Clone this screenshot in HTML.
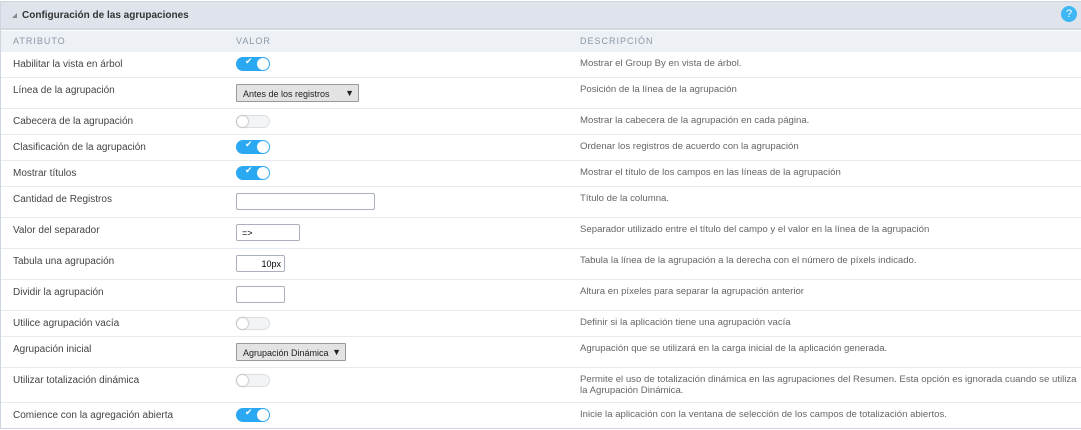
<!DOCTYPE html><html><head><style>
*{margin:0;padding:0;box-sizing:border-box}
body{width:1081px;height:430px;background:#fff;font-family:"Liberation Sans",Arial,sans-serif;position:relative;overflow:hidden}
.frame{position:absolute;left:0;top:1px;width:1090px;height:428px;border:1px solid #cdd5df}
.hdr{position:absolute;left:1px;top:2px;width:1080px;height:28px;background:#dfe4ec;border-bottom:2px solid #d2d9e2}
.hdr span{position:absolute;left:21px;top:8px;font-size:10px;font-weight:bold;color:#333}
.tri{position:absolute;left:11px;top:11px;width:0;height:0;border-left:5px solid transparent;border-bottom:5px solid #888}
.help{position:absolute;left:1060px;top:4px;width:16px;height:16px;border-radius:50%;background:#3fb7f5;color:#fff;font-size:11px;text-align:center;line-height:16px}
.ch{position:absolute;left:1px;top:31px;width:1080px;height:21px;background:#edf0f4;font-size:9px;letter-spacing:1px;color:#8a97a6}
.ch span{position:absolute;top:5px}
.row{position:absolute;left:1px;width:1080px;border-bottom:1px solid #e6ebf1;font-size:10px}
.l{position:absolute;left:12px;top:7px;color:#444}
.d{position:absolute;left:579px;top:6px;color:#666;font-size:9.6px;line-height:11px;width:500px}
.t{position:absolute;left:235px;top:5px;width:34px;height:14px;border-radius:7px;background:#2aa8f2}
.t::after{content:"";position:absolute;right:1px;top:1px;width:12px;height:12px;border-radius:50%;background:#fff}
.t i{position:absolute;left:9px;top:-1px;color:#fff;font-size:9px;font-style:normal}
.o{position:absolute;left:235px;top:6px;width:34px;height:13px;border-radius:7px;background:#f3f4f6;border:1px solid #dcdfe4}
.o::after{content:"";position:absolute;left:0;top:0;width:11px;height:11px;border-radius:50%;background:#fff;box-shadow:0 0 2px #888}
.in{position:absolute;left:235px;height:17px;border:1px solid #a9b0ba;border-radius:2px;background:#fff;font-size:9px;padding:3px 5px}
.sel{position:absolute;left:235px;height:18px;border:1px solid #999;background:#e3e3e3;font-size:9px;padding:4px 6px;color:#222;border-radius:1px}
.sel b{position:absolute;right:4px;top:3px;font-size:9px}
</style></head><body>
<div class="frame"></div>
<div class="hdr"><div class="tri"></div><span>Configuración de las agrupaciones</span><div class="help">?</div></div>
<div class="ch"><span style="left:12px">ATRIBUTO</span><span style="left:235px">VALOR</span><span style="left:579px">DESCRIPCIÓN</span></div>

<div class="row" style="top:52px;height:26px"><span class="l">Habilitar la vista en árbol</span><div class="t"><i>✔</i></div><span class="d">Mostrar el Group By en vista de árbol.</span></div>
<div class="row" style="top:78px;height:31px"><span class="l">Línea de la agrupación</span><div class="sel" style="top:6px;width:123px">Antes de los registros<b>▼</b></div><span class="d">Posición de la línea de la agrupación</span></div>
<div class="row" style="top:109px;height:26px"><span class="l">Cabecera de la agrupación</span><div class="o"></div><span class="d">Mostrar la cabecera de la agrupación en cada página.</span></div>
<div class="row" style="top:135px;height:26px"><span class="l">Clasificación de la agrupación</span><div class="t"><i>✔</i></div><span class="d">Ordenar los registros de acuerdo con la agrupación</span></div>
<div class="row" style="top:161px;height:26px"><span class="l">Mostrar títulos</span><div class="t"><i>✔</i></div><span class="d">Mostrar el título de los campos en las líneas de la agrupación</span></div>
<div class="row" style="top:187px;height:31px"><span class="l">Cantidad de Registros</span><div class="in" style="top:6px;width:139px"></div><span class="d">Título de la columna.</span></div>
<div class="row" style="top:218px;height:31px"><span class="l">Valor del separador</span><div class="in" style="top:6px;width:64px">=&gt;</div><span class="d">Separador utilizado entre el título del campo y el valor en la línea de la agrupación</span></div>
<div class="row" style="top:249px;height:31px"><span class="l">Tabula una agrupación</span><div class="in" style="top:6px;width:49px;text-align:right;padding-right:3px">10px</div><span class="d">Tabula la línea de la agrupación a la derecha con el número de píxels indicado.</span></div>
<div class="row" style="top:280px;height:31px"><span class="l">Dividir la agrupación</span><div class="in" style="top:6px;width:49px"></div><span class="d">Altura en píxeles para separar la agrupación anterior</span></div>
<div class="row" style="top:311px;height:26px"><span class="l">Utilice agrupación vacía</span><div class="o"></div><span class="d">Definir si la aplicación tiene una agrupación vacía</span></div>
<div class="row" style="top:337px;height:31px"><span class="l">Agrupación inicial</span><div class="sel" style="top:6px;width:110px">Agrupación Dinámica<b>▼</b></div><span class="d">Agrupación que se utilizará en la carga inicial de la aplicación generada.</span></div>
<div class="row" style="top:368px;height:35px"><span class="l">Utilizar totalización dinámica</span><div class="o"></div><span class="d">Permite el uso de totalización dinámica en las agrupaciones del Resumen. Esta opción es ignorada cuando se utiliza la Agrupación Dinámica.</span></div>
<div class="row" style="top:403px;height:26px;border-bottom:1px solid #cdd5df"><span class="l">Comience con la agregación abierta</span><div class="t"><i>✔</i></div><span class="d">Inicie la aplicación con la ventana de selección de los campos de totalización abiertos.</span></div>
</body></html>
